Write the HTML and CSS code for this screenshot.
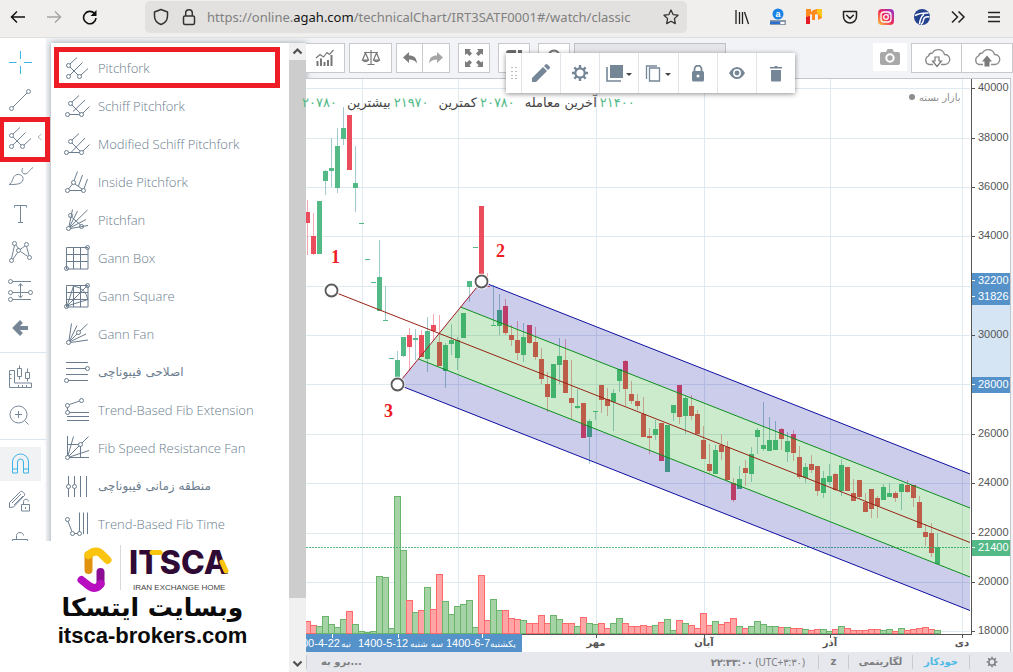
FILE: index.html
```html
<!DOCTYPE html>
<html lang="fa">
<head>
<meta charset="utf-8">
<title>Technical chart</title>
<link rel="stylesheet" href="styles.css">
</head>
<body>
<svg class="sprite" aria-hidden="true">
  <symbol id="i-pitchfork" viewBox="0 0 28 26"><path d="M6 9 13 2.500M6 12l8 8M6 20 18.500 7.500M17 20l7-6.500"/><circle cx="4.500" cy="10.500" r="2"/><circle cx="4.500" cy="21.500" r="2"/><circle cx="15.500" cy="21.500" r="2"/></symbol>
  <symbol id="i-schiff" viewBox="0 0 28 26"><path d="M8 9l7-6.500M8 12l8 8M9 18.500 21 7M5.500 21.500h10M19 20l6.500-6.500"/><circle cx="6.500" cy="10.500" r="2"/><circle cx="3.500" cy="21.500" r="2"/><circle cx="17.500" cy="21.500" r="2"/></symbol>
  <symbol id="i-mschiff" viewBox="0 0 28 26"><path d="M8 9l7-6.500M8 12l8 8M7 21.500 21 7M4.500 21.500h11M19 20l6.500-6.500"/><circle cx="6.500" cy="10.500" r="2"/><circle cx="2.500" cy="21.500" r="2"/><circle cx="17.500" cy="21.500" r="2"/></symbol>
  <symbol id="i-inside" viewBox="0 0 28 26"><path d="M10 11.500l3.500-9M11 15l7 5M4.500 20l4-5M14.500 17l4-11M5.500 21.500h12M20 19.500l3.500-9.500"/><circle cx="9.500" cy="13.500" r="2"/><circle cx="3.500" cy="21.500" r="2"/><circle cx="19.500" cy="21.500" r="2"/></symbol>
  <symbol id="i-pitchfan" viewBox="0 0 28 26"><path d="M5 19.500 8.500 2.500M5.500 20l8-16M6 20 23.500 3M6.500 20.500 22 12.500M6.500 21.500l17.500-3M7.500 10l9 8"/><circle cx="6.500" cy="8.500" r="2"/><circle cx="4.500" cy="21.500" r="2"/><circle cx="17.500" cy="19.500" r="2"/></symbol>
  <symbol id="i-gbox" viewBox="0 0 28 26"><path d="M2.500 2.500h21.500v21.500H2.500zM9.500 2.500V24M16.500 2.500V24M2.500 9.500H24M2.500 16.500H24"/><circle cx="23.500" cy="2.500" r="2"/><circle cx="2.500" cy="23.500" r="2"/></symbol>
  <symbol id="i-gsquare" viewBox="0 0 28 26"><path d="M2.500 2.500h21.500v21.500H2.500zM9.500 2.500V24M16.500 2.500V24M2.500 9.500H24M2.500 16.500H24M3 23 24 2M3 23 9.500 3M3 23l21-6.500M9.500 3Q22 5 24 17"/><circle cx="23.500" cy="2.500" r="2"/><circle cx="2.500" cy="23.500" r="2"/></symbol>
  <symbol id="i-gfan" viewBox="0 0 28 26"><path d="M5 19.500 7.500 2.500M5.500 20 13 4.500M6 20l7-7M16 10l7.500-7M6.500 20.500 22 13M6.500 21.500l17.500-2.500"/><circle cx="14.500" cy="11.500" r="2"/><circle cx="4.500" cy="21.500" r="2"/></symbol>
  <symbol id="i-fib" viewBox="0 0 28 26"><path d="M2 3.500h22M2 9.500h20M2 15.500h22M4 21.500h20"/><circle cx="23.500" cy="9.500" r="2"/><circle cx="2.500" cy="21.500" r="2"/></symbol>
  <symbol id="i-fibext" viewBox="0 0 28 26"><path d="M15.500 4l-10 3.500M3.500 10.500v3M5.500 15.500H25M3 19.500h22M3 23.500h22"/><circle cx="17.500" cy="3.500" r="2"/><circle cx="3.500" cy="8.500" r="2"/><circle cx="3.500" cy="15.500" r="2"/></symbol>
  <symbol id="i-fibspeed" viewBox="0 0 28 26"><path d="M3.500 1v19.500M5.500 22.500H25M4 20.500 9.500 1.500M5 21 15 11M18 8l6.500-6.500M5.500 22 25 15.500M3.500 9.500h11M16.500 11.500v11"/><circle cx="3.500" cy="22.500" r="2"/><circle cx="16.500" cy="9.500" r="2"/></symbol>
  <symbol id="i-fibzone" viewBox="0 0 28 26"><path d="M4.500 3v8.500M4.500 15.500V24M10.500 3v8.500M10.500 15.500V24M16.500 3v21M22.500 3v21"/><circle cx="4.500" cy="13.500" r="2"/><circle cx="10.500" cy="13.500" r="2"/></symbol>
  <symbol id="i-fibtime" viewBox="0 0 28 26"><path d="M4 10.500l4 10M10.500 22.500h3M15.500 1.500v19M19.500 1.500v21.500M23.500 1.500v21.500"/><circle cx="3.500" cy="8.500" r="2"/><circle cx="8.500" cy="22.500" r="2"/><circle cx="15.500" cy="22.500" r="2"/></symbol>
  <symbol id="i-gear" viewBox="0 0 18 18"><g fill="none" stroke="currentColor"><circle cx="9" cy="9" r="4.700" stroke-width="2.200"/><path stroke-width="2.400" d="M9 1v3M9 14v3M1 9h3M14 9h3M3.300 3.300l2.200 2.200M12.500 12.500l2.200 2.200M3.300 14.700l2.200-2.200M12.500 5.500l2.200-2.200"/></g></symbol>
  <symbol id="i-cloud" viewBox="0 0 28 20"><path fill="#fff" stroke="#8a8a8a" stroke-width="1.300" d="M10 16.500H6A4.500 4.500 0 0 1 5.500 8a4 4 0 0 1 4-3 6.500 6.500 0 0 1 12 1.500 5 5 0 0 1 .5 10h-4"/></symbol>
</svg>

<header class="browser">
  <button class="nav" aria-label="Back"><svg width="16" height="14" viewBox="0 0 16 14"><path d="M15 7H1.500M7 1.500 1.500 7 7 12.500" stroke="#111" stroke-width="1.500" fill="none"/></svg></button>
  <button class="nav" aria-label="Forward"><svg width="16" height="14" viewBox="0 0 16 14"><path d="M1 7h13.500M9 1.500 14.500 7 9 12.500" stroke="#a5a5a5" stroke-width="1.500" fill="none"/></svg></button>
  <button class="nav" aria-label="Reload"><svg width="16" height="16" viewBox="0 0 16 16"><path d="M14 9A6.200 6.200 0 1 1 12.500 4.500" stroke="#111" stroke-width="1.600" fill="none"/><path d="M14.500 1v6h-6z" fill="#111"/></svg></button>
  <div class="address">
    <svg width="16" height="18" viewBox="0 0 16 18"><path d="M8 1.500 14.500 4v4c0 4-2.500 7-6.500 8.500C4 15 1.500 12 1.500 8V4z" stroke="#333" stroke-width="1.500" fill="none" stroke-linejoin="round"/></svg>
    <svg width="14" height="18" viewBox="0 0 14 18"><rect x="1.500" y="8" width="11" height="8.500" rx="1.500" stroke="#333" stroke-width="1.500" fill="none"/><path d="M3.700 8V5a3.300 3.300 0 0 1 6.600 0v3" stroke="#333" stroke-width="1.500" fill="none"/></svg>
    <span class="url">https://online.<b>agah.com</b>/technicalChart/IRT3SATF0001#/watch/classic</span>
    <svg width="16" height="16" viewBox="0 0 16 16"><path d="m8 1 2.100 4.600 4.900.6-3.600 3.400.9 5L8 12.200l-4.300 2.400.9-5L1 6.200l4.900-.6z" stroke="#333" stroke-width="1.300" fill="none" stroke-linejoin="round"/></svg>
  </div>
  <div class="extensions">
    <svg width="16" height="16" viewBox="0 0 16 16"><path d="M2 1v14M5.500 3v12M8.500 3v12M10.500 3l4 12" stroke="#222" stroke-width="1.300" fill="none"/></svg>
    <svg width="16" height="18" viewBox="0 0 16 18"><circle cx="8" cy="6" r="5.500" fill="#1a82e2"/><text x="8" y="9" class="ext-a">a</text><path d="M0 12h16v5H0z" fill="#8b98a8"/><path d="M0 13.500h10v2.500H0z" fill="#2a6fd0"/><path d="M10.500 14h4v2h-4z" fill="#fff"/></svg>
    <svg width="16" height="16" viewBox="0 0 16 16"><path d="M0 0h5v3q2-3 5-2.500V0h6v9l-4 2V6q-2-2-3 0v5H6V6Q5 4 4 6v4l-4 1z" fill="#ff8a1e"/><path d="M11 0h5v9l-5-5z" fill="#fdc41b"/><path d="M0 8l4-1v8H0z" fill="#e21b25"/></svg>
    <svg width="16" height="16" viewBox="0 0 16 16"><path d="M1.500 2.500h13v5a6.500 6.500 0 0 1-13 0zM4.700 6.300 8 9.500l3.300-3.200" stroke="#222" stroke-width="1.500" fill="none" stroke-linejoin="round" stroke-linecap="round"/></svg>
    <svg width="16" height="16" viewBox="0 0 16 16"><defs><linearGradient id="insta" x1="0" y1="1" x2="1" y2="0"><stop offset="0" stop-color="#ffc83d"/><stop offset=".5" stop-color="#ee2a5b"/><stop offset="1" stop-color="#8a35d6"/></linearGradient></defs><rect width="16" height="16" rx="4" fill="url(#insta)"/><rect x="3" y="3" width="10" height="10" rx="3" stroke="#fff" stroke-width="1.300" fill="none"/><circle cx="8" cy="8" r="2.300" stroke="#fff" stroke-width="1.300" fill="none"/><circle cx="11" cy="5" r=".7" fill="#fff"/></svg>
    <svg width="16" height="16" viewBox="0 0 16 16"><circle cx="8" cy="8" r="8" fill="#24418e"/><path d="M1 6.500Q6 3.500 14.500 4M5.500 15Q6 9 10 5M15.500 8Q10 7 9.500 11 9 14 7 15.500" stroke="#fff" stroke-width="1.500" fill="none"/></svg>
    <svg width="16" height="16" viewBox="0 0 16 16"><path d="m2 2.500 5.500 5.500L2 13.500M8.500 2.500 14 8l-5.500 5.500" stroke="#222" stroke-width="1.500" fill="none"/></svg>
    <svg width="16" height="16" viewBox="0 0 16 16"><path d="M2 3.500h12M2 8h12M2 12.500h12" stroke="#222" stroke-width="1.500"/></svg>
  </div>
</header>

<main class="app">
  <nav class="rail">
    <button aria-label="Crosshair" class="tint"><svg class="ico" viewBox="0 0 28 26"><path d="M2 13.500h7.500M17 13.500h8M13.500 2v8M13.500 17v8"/></svg></button>
    <button aria-label="Trend line"><svg class="ico" viewBox="0 0 28 26"><path d="M6 20 20 6"/><circle cx="4.500" cy="21.500" r="2"/><circle cx="21.500" cy="4.500" r="2"/></svg></button>
    <button aria-label="Pitchfork tools" class="marked"><svg class="ico"><use href="#i-pitchfork"/></svg><svg class="chev" width="5" height="8" viewBox="0 0 5 8"><path d="M4.500 1 1 4l3.500 3"/></svg></button>
    <button aria-label="Brush"><svg class="ico" viewBox="0 0 28 26"><path d="M2 21.500c4-1 3-9 8-10 4-.5 6.500 2 6 5-1 5-7 5-14 5zM16 5c-2 2-1 6 2 6 3 0 4-4 8-6.500"/></svg></button>
    <button aria-label="Text"><svg class="ico" viewBox="0 0 28 26"><path d="M7.500 6.500V4.500h12v2M13.500 4.500v17M11 21.500h5"/></svg></button>
    <button aria-label="Patterns"><svg class="ico" viewBox="0 0 28 26"><path d="M7.500 6.500l-3 13M9 6l3 4M13.500 12.500l7.500 5M18 7l-5 3.500M6 20l5-7M19.500 7.500l2.500 9"/><circle cx="7.500" cy="4.500" r="2"/><circle cx="19.500" cy="5.500" r="2"/><circle cx="11.500" cy="11.500" r="2"/><circle cx="4.500" cy="21.500" r="2"/><circle cx="22.500" cy="18.500" r="2"/></svg></button>
    <button aria-label="Measure"><svg class="ico" viewBox="0 0 28 26"><path d="M5.500 4.500H24M5.500 15.500h16M5.500 22.500H24M13.500 7v13M11.500 9l2-2.500 2 2.500M11.500 18.500l2 2.500 2-2.500"/><circle cx="3.500" cy="4.500" r="2"/><circle cx="3.500" cy="15.500" r="2"/><circle cx="23.500" cy="15.500" r="2"/><circle cx="3.500" cy="22.500" r="2"/></svg></button>
    <button aria-label="Arrow"><svg class="ico" viewBox="0 0 28 26"><path d="M21 13H9M14.500 6.500 8 13l6.500 6.500" stroke-width="4"/></svg></button>
    <hr>
    <button aria-label="Forecast"><svg class="ico" viewBox="0 0 28 26"><path d="M2.500 6.500h5v12.500h17v4.500h-22zM2.500 10.500h2M2.500 14.500h2M11.500 21v2M15.500 21v2M19.500 21v2M10.500 4.500h4v8h-4zM12.500 1.500v3M12.500 12.500v3M18.500 8.500h4v6h-4zM20.500 4.500v4M20.500 14.500v3"/></svg></button>
    <button aria-label="Zoom in"><svg class="ico" viewBox="0 0 28 26"><circle cx="11.500" cy="12.500" r="8.500"/><path d="M17.500 18.500l4 4M8 12.500h7M11.500 9v7"/></svg></button>
    <hr>
    <button aria-label="Magnet" class="tint active"><svg class="ico" viewBox="0 0 28 26"><path d="M5.500 22V11a8 8 0 0 1 16 0v11h-5V11a3 3 0 0 0-6 0v11zM5.500 18h5M16.500 18h5"/></svg></button>
    <button aria-label="Lock drawings"><svg class="ico" viewBox="0 0 28 26"><path d="M2.500 18.500v-5l11-11c1.500-1 5 2 4 4l-11 11.500zM5 14 14 5M7 16l9-9M14.500 15.500h8v6.500h-8zM16.500 15.500v-3c0-3 5-3 5 0M18.500 18v2"/></svg></button>
    <button aria-label="Lock all"><svg class="ico" viewBox="0 0 28 26"><path d="M5.500 16.500v-4h15v10h-15zM9.500 12.500v-4c0-4 7-4 7 0"/></svg></button>
  </nav>

  <section class="menu">
    <ul class="menu-list">
      <li class="marked"><svg class="ico"><use href="#i-pitchfork"/></svg>Pitchfork</li>
      <li><svg class="ico"><use href="#i-schiff"/></svg>Schiff Pitchfork</li>
      <li><svg class="ico"><use href="#i-mschiff"/></svg>Modified Schiff Pitchfork</li>
      <li><svg class="ico"><use href="#i-inside"/></svg>Inside Pitchfork</li>
      <li><svg class="ico"><use href="#i-pitchfan"/></svg>Pitchfan</li>
      <li><svg class="ico"><use href="#i-gbox"/></svg>Gann Box</li>
      <li><svg class="ico"><use href="#i-gsquare"/></svg>Gann Square</li>
      <li><svg class="ico"><use href="#i-gfan"/></svg>Gann Fan</li>
      <li class="fa"><svg class="ico"><use href="#i-fib"/></svg>اصلاحی فیبوناچی</li>
      <li><svg class="ico"><use href="#i-fibext"/></svg>Trend-Based Fib Extension</li>
      <li><svg class="ico"><use href="#i-fibspeed"/></svg>Fib Speed Resistance Fan</li>
      <li class="fa"><svg class="ico"><use href="#i-fibzone"/></svg>منطقه زمانی فیبوناچی</li>
      <li><svg class="ico"><use href="#i-fibtime"/></svg>Trend-Based Fib Time</li>
    </ul>
    <div class="scrollbar">
      <svg width="17" height="17" viewBox="0 0 17 17"><path d="M4.500 10.500l4-4 4 4" stroke="#505050" stroke-width="2.200" fill="none"/></svg>
      <div class="thumb"></div>
      <svg width="17" height="17" viewBox="0 0 17 17"><path d="M4.500 6.500l4 4 4-4" stroke="#505050" stroke-width="2.200" fill="none"/></svg>
    </div>
  </section>

  <section class="work">
    <div class="toolbar">
      <div class="group">
        <button class="tb cut" aria-label="Indicators"><svg width="20" height="18" viewBox="0 0 20 18"><path d="M2.500 17v-5M6 17V9.500M9.500 17v-4M13 17v-6M16.500 17V6" stroke="#777" stroke-width="2"/><path d="m1 9 4-3.500 3.500 2.500L12 3.500l2.500 2L18.500 1" stroke="#777" stroke-width="1.200" fill="none"/></svg></button>
        <button class="tb compare" aria-label="Compare"><svg width="20" height="18" viewBox="0 0 20 18"><path d="M10 1v14M6.500 15.500h7M3 3.500h14M4.500 4 1.500 11h6zM15.500 4l-3 7h6zM1.500 11q3 3 6 0M12.500 11q3 3 6 0" stroke="#777" stroke-width="1.200" fill="none"/></svg></button>
        <div class="pair"><button class="tb" aria-label="Undo"><svg width="16" height="14" viewBox="0 0 16 14"><path d="M7 1v3.500c5 0 7.500 2 8 8-2-3-4-4-8-4V12L1 6.500z" fill="#7c7c7c"/></svg></button><button class="tb" aria-label="Redo"><svg width="16" height="14" viewBox="0 0 16 14"><path d="M9 1v3.500c-5 0-7.500 2-8 8 2-3 4-4 8-4V12l6-5.500z" fill="#a5a5a5"/></svg></button></div>
      </div>
      <div class="group">
        <button class="tb" aria-label="Full screen"><svg width="20" height="20" viewBox="0 0 20 20"><path d="M1 1h6L5.500 2.800 8 5.500 5.500 8 2.800 5.500 1 7zM19 1v6l-1.800-1.500L14.500 8 12 5.500l2.700-2.700L13 1zM1 19v-6l1.800 1.500L5.500 12 8 14.500l-2.500 2.700L7 19zM19 19h-6l1.700-1.800L12 14.500l2.500-2.500 2.700 2.500L19 13z" fill="#7c7c7c"/></svg></button>
      </div>
      <div class="group">
        <button class="tb" aria-label="Save layout"><svg width="18" height="18" viewBox="0 0 18 18"><path d="M1 4a3 3 0 0 1 3-3h7v5H4v12H1zM13 1h4v17h-4z" fill="#6f6f6f"/></svg></button>
      </div>
      <div class="group">
        <button class="tb" aria-label="Load layout"><svg width="18" height="18" viewBox="0 0 18 18"><path d="M3 9c0-10 12-10 12 0" stroke="#777" stroke-width="2" fill="none"/></svg></button>
        <input class="search" aria-label="Symbol">
      </div>
      <div class="group right">
        <button class="camera" aria-label="Snapshot"><svg width="20" height="16" viewBox="0 0 20 16"><path d="M2 3h4l1.500-3h5L14 3h4a2 2 0 0 1 2 2v9a2 2 0 0 1-2 2H2a2 2 0 0 1-2-2V5a2 2 0 0 1 2-2z" fill="#a8a8a8"/><circle cx="10" cy="9" r="3.700" stroke="#fff" stroke-width="2" fill="none"/></svg></button>
        <div class="pair wide"><button class="tb" aria-label="Download"><svg width="28" height="20" viewBox="0 0 28 20"><use href="#i-cloud"/><path d="M12 9h4v4h2.500L14 18.500 9.500 13H12z" fill="#fff" stroke="#777" stroke-width="1.200"/></svg></button><button class="tb" aria-label="Upload"><svg width="28" height="20" viewBox="0 0 28 20"><use href="#i-cloud"/><path d="M11.500 18.500v-5H9L14 7.500l5 6h-2.500v5z" fill="#7b7b7b"/></svg></button></div>
      </div>
    </div>

    <div class="chart">
      <svg id="chart" viewBox="306 79 704 573" preserveAspectRatio="xMinYMin meet" role="img" aria-label="Price chart"></svg>
      <div class="legend">
        <span class="pair-v"><i>۲۰۷۸۰</i></span>
        <span class="pair-v">بیشترین<i>۲۱۹۷۰</i></span>
        <span class="pair-v">کمترین<i>۲۰۷۸۰</i></span>
        <span class="pair-v">آخرین معامله<i>۲۱۴۰۰</i></span>
      </div>
    </div>

    <div class="palette">
      <span class="grip"><svg width="8" height="14" viewBox="0 0 8 14"><path d="M1 1h2v1H1zM5 1h2v1H5zM1 5h2v1H1zM5 5h2v1H5zM1 9h2v1H1zM5 9h2v1H5zM1 12h2v1H1zM5 12h2v1H5z" fill="#b8bcc4"/></svg></span>
      <button aria-label="Edit"><svg width="18" height="18" viewBox="0 0 18 18"><path d="M0 14 11 3l4 4L4 18H0zM12 2l1.500-1.500q1-1 2 0l2 2q1 1 0 2L16 6z" fill="#758696"/></svg></button>
      <button aria-label="Settings"><svg width="18" height="18"><use href="#i-gear"/></svg></button>
      <button aria-label="Background"><svg width="26" height="17" viewBox="0 0 26 17"><path d="M4 0h13v13H4z" fill="#758696"/><path d="M1 2v14h14" stroke="#758696" stroke-width="1.600" fill="none"/><path d="M20 8h6l-3 3z" fill="#444"/></svg></button>
      <button aria-label="Copy"><svg width="26" height="17" viewBox="0 0 26 17"><path d="M4.500 3h10v13h-10zM1.500 14V1H12" stroke="#758696" stroke-width="1.300" fill="none"/><path d="M20 8h6l-3 3z" fill="#444"/></svg></button>
      <button aria-label="Lock"><svg width="14" height="17" viewBox="0 0 14 17"><path d="M3.500 7V4a3.500 3.500 0 0 1 7 0v3" stroke="#758696" stroke-width="1.800" fill="none"/><rect x="1" y="6" width="12" height="10.500" rx="1.500" fill="#758696"/><circle cx="7" cy="11" r="1.500" fill="#fff"/></svg></button>
      <button aria-label="Hide"><svg width="16" height="12" viewBox="0 0 16 12"><path d="M0 6q3.500-6 8-6t8 6q-3.500 6-8 6T0 6z" fill="#758696"/><circle cx="8" cy="6" r="3.200" fill="none" stroke="#fff" stroke-width="1.500"/></svg></button>
      <button aria-label="Remove"><svg width="14" height="17" viewBox="0 0 14 17"><path d="M2 5h10v10.500q0 1-1 1H3q-1 0-1-1zM1 2h4l1-1h2l1 1h4v1.500H1z" fill="#758696"/></svg></button>
    </div>

    <footer class="status">
      <button class="goto">برو به...</button>
      <span class="clock"><b>۲۲:۳۳:۰۰</b> (UTC+۳:۳۰)</span>
      <button class="cell z">z</button>
      <button class="cell log">لگاریتمی</button>
      <button class="cell auto">خودکار</button>
      <button class="cell gear" aria-label="Chart settings"><svg width="12" height="12"><use href="#i-gear"/></svg></button>
    </footer>
  </section>

  <aside class="brand">
    <svg width="160" height="50" viewBox="0 0 160 50" role="img" aria-label="ITSCA Iran Exchange Home">
      <path d="M15.500 12v15" stroke="#e0920f" stroke-width="8" stroke-linecap="round"/>
      <path d="M15.500 12q8-7 14 0l5 5" stroke="#fbc40e" stroke-width="8" stroke-linecap="round" fill="none"/>
      <path d="M27.500 29v12" stroke="#8b0d93" stroke-width="8" stroke-linecap="round"/>
      <path d="M8.500 37l5 4q9 8 14 0" stroke="#b70fc0" stroke-width="8" stroke-linecap="round" fill="none"/>
      <path d="M47.500 2v45" stroke="#d9d9d9"/>
      <text class="word" x="56" y="31">ITSCA</text>
      <path d="M79 9.500h8" stroke="#fbc40e" stroke-width="5" stroke-linecap="round"/>
      <path d="M149 19l4 9" stroke="#fbc40e" stroke-width="5" stroke-linecap="round"/>
      <text class="tag" x="60" y="47">IRAN EXCHANGE HOME</text>
    </svg>
    <p class="site-fa">وبسایت ایتسکا</p>
    <p class="site-en">itsca-brokers.com</p>
  </aside>
</main>
<script src="chart.js"></script>
</body>
</html>
```

FILE: styles.css
```css
*, *::before { box-sizing: border-box; }
body {
  margin: 0;
  height: 100vh;
  display: flex;
  flex-direction: column;
  overflow: hidden;
  background: #f1f3f6;
  font-family: "Noto Sans", "DejaVu Sans", sans-serif;
}
button { border: 0; padding: 0; background: none; font: inherit; color: inherit; display: flex; align-items: center; justify-content: center; }
svg { display: block; flex: none; }
.sprite { position: absolute; width: 0; height: 0; }

/* browser bar */
.browser { display: flex; align-items: center; flex: none; height: 38px; padding: 0 10px 3px; background: #f0efee; border-bottom: 1px solid #dedede; }
.nav { width: 16px; margin-right: 20px; }
.nav:nth-child(3) { margin-right: 47px; }
.address { flex: 1; display: flex; align-items: center; height: 32px; padding: 0 8px; border-radius: 5px; background: #e2e1df; }
.address svg:nth-child(2) { margin: 0 11px 0 13px; }
.url { flex: 1; color: #808080; font-family: "Noto Sans", sans-serif; font-size: 13px; white-space: nowrap; }
.url b { font-weight: 400; color: #151515; }
.extensions { display: flex; align-items: center; gap: 20px; margin-left: 47px; padding-right: 1px; }
.ext-a { font: bold 9px "Liberation Sans", sans-serif; fill: #fff; text-anchor: middle; }

/* drawing rail */
.app { position: relative; flex: 1; display: flex; min-height: 0; overflow: hidden; }
.rail { width: 46px; flex: none; padding-top: 5px; background: #fff; color: #758696; }
.rail button { position: relative; width: 42px; height: 38px; }
.rail hr { margin: 5px 0; border: 0; border-top: 1px solid #dbe6ee; }
.rail .tint { color: #3bb3e4; }
.rail .active { background: linear-gradient(#f1f2f4, #f1f2f4) 0 50% / 41px 34px no-repeat; }
.rail .marked::before { content: ""; position: absolute; top: -2px; left: -1px; width: 51px; height: 45px; border: 5px solid #ee1c24; z-index: 3; }
.chev { position: absolute; right: 0; top: 14px; fill: none; stroke: #a9b3bd; }
.ico { width: 28px; height: 26px; fill: none; stroke: currentColor; stroke-width: 1; }

/* tools menu */
.menu { display: flex; width: 255px; flex: none; margin: 5px 0 0 5px; background: #fff; box-shadow: 0 0 6px rgba(60, 75, 90, .5); }
.menu-list { flex: 1; margin: 0; padding: 6px 0 0; list-style: none; color: #6a7c8d; font-family: "Open Sans", "Noto Sans", sans-serif; font-weight: 300; font-size: 13px; }
.menu-list li { position: relative; display: flex; align-items: center; gap: 6px; height: 38px; padding-left: 13px; white-space: nowrap; }
.menu-list .fa { font-family: "DejaVu Sans", sans-serif; font-weight: 400; font-size: 12px; }
.menu-list .marked::before { content: ""; position: absolute; inset: -2px 9px -1px 3px; border: 5px solid #ee1c24; }
.scrollbar { display: flex; flex-direction: column; width: 17px; background: #f0f0f0; }
.thumb { flex: 1; margin-bottom: 57px; background: #cdcdcd; }

/* chart column */
.work { position: relative; flex: 1; min-width: 0; display: flex; flex-direction: column; }
.toolbar { display: flex; flex: none; gap: 8px; height: 40px; padding-top: 5px; }
.group { display: flex; gap: 4px; }
.tb { width: 32px; height: 30px; border: 1px solid #c9c9cb; background: #fff; }
.tb.cut { width: 39px; border-left: 0; }
.tb.compare { width: 43px; }
.pair { display: flex; }
.pair .tb { width: 27px; }
.pair .tb + .tb { border-left-width: 0; }
.pair.wide .tb { width: 51px; }
.search { width: 152px; height: 30px; border: 1px solid #bfc0c4; background: #e6e6ea; }
.right { margin-left: auto; }
.camera { width: 34px; height: 28px; background: #fff; }
.chart { position: relative; flex: 1; min-height: 0; margin-right: 2px; border-top: 1px solid #c4c6ca; border-right: 1px solid #c4c6ca; background: #fff; }
#chart { width: 100%; height: 100%; }
.legend { position: absolute; left: -4px; top: 15px; display: flex; gap: 10px; color: #444; font: 13px/18px "DejaVu Sans", sans-serif; white-space: nowrap; }
.pair-v { display: flex; gap: 3px; }
.legend i { font-style: normal; color: #53b987; }
.palette { position: absolute; left: 200px; top: 15px; display: flex; width: 289px; height: 40px; background: #fff; box-shadow: 0 1px 5px rgba(0, 0, 0, .45); color: #758696; }
.grip { width: 15px; display: flex; align-items: center; justify-content: center; }
.palette button { flex: 1; border-left: 1px solid #e2e4ea; }

/* status bar */
.status { display: flex; flex: none; align-items: center; height: 20px; background: #e6e8ed; color: #7d7d80; font: 11px/14px "DejaVu Sans", sans-serif; }
.goto { margin-right: auto; padding-left: 14px; border-left: 1px solid #c9ccd1; direction: ltr; font-weight: 700; font-size: 10px; }
.clock { margin-right: 13px; font-family: "Noto Sans", "DejaVu Sans", sans-serif; font-size: 10px; }
.cell { height: 14px; border-left: 1px solid #c9ccd1; font-weight: 700; font-size: 10px; }
.z { width: 30px; }
.log { width: 64px; }
.auto { width: 57px; color: #4dbbe6; }
.gear { width: 44px; }

/* chart text */
.price { font: 11px "Liberation Sans", sans-serif; fill: #555; }
.tagtext { font: 11px "Liberation Sans", sans-serif; fill: #fff; }
.tagday { font: 9px "DejaVu Sans", sans-serif; fill: #fff; }
.month { font: bold 10px "DejaVu Sans", sans-serif; fill: #555; text-anchor: middle; }
.market { font: 10px "DejaVu Sans", sans-serif; fill: #8d8d8d; }
.note { font: bold 18px "Liberation Serif", serif; fill: #ee1c24; }

/* site badge */
.brand { position: absolute; left: 0; bottom: 0; width: 289px; height: 131px; padding: 2px 0 0 16px; background: #fff; color: #0b0b0b; display: flex; flex-direction: column; align-items: center; }
.brand p { margin: 0; }
.word { font: 800 32px Inter, sans-serif; fill: #2f0a35; }
.tag { font: 8px "Liberation Sans", sans-serif; fill: #444; }
.brand .site-fa { font: 700 25px/30px "DejaVu Sans", sans-serif; }
.brand .site-en { font: 700 22px/26px "Liberation Sans", sans-serif; }
```

FILE: chart.js
```js
// Each candle: direction, high, low, body top, body bottom, volume top.
const rows = `r 200 255 212 223 621|r 213 255 236 254 625|g 201 254 201 254 626|g 170 195 171 181 616|g 138 187 168 171 624|g 128 193 146 188 627|g 107 145 128 139 619|r 115 170 115 170 611|g 146 212 183 188 624|g 223 224 223 224 631|g 259 260 259 260 632|g 282 283 282 283 631|g 240 311 277 311 576|g 286 321 320 321 577|g 358 359 358 359 628|g 351 377 360 377 496|g 337 357 337 356 550|r 328 371 335 347 600|g 329 360 338 340 612|r 330 357 335 357 610|g 317 372 331 359 587|r 314 340 325 331 609|r 315 366 342 366 574|g 343 388 345 371 601|g 324 355 340 344 614|g 337 370 340 358 606|g 313 338 313 338 604|g 281 302 281 287 600|g 247 248 247 248 627|r 206 274 206 274 575|r 273 287 286 287 620|g 285 326 325 326 599|g 294 335 310 326 610|r 299 335 306 333 610|r 325 346 335 340 618|r 321 360 340 353 619|g 323 362 337 355 620|r 325 344 325 343 623|r 327 360 342 357 623|r 348 384 359 379 615|r 372 412 384 397 623|g 364 398 364 398 615|g 338 384 356 365 619|r 339 393 360 393 623|r 360 419 398 403 623|g 389 409 406 408 626|r 403 438 403 438 617|g 419 464 421 437 623|g 411 420 411 412 624|r 385 413 385 400 623|r 388 416 399 406 628|g 389 431 393 402 623|g 369 392 369 381 618|r 360 406 361 389 623|r 381 404 394 401 626|r 394 410 401 406 626|r 397 437 414 437 625|r 428 454 436 438 626|g 420 440 429 435 625|r 423 461 423 461 622|g 425 472 425 472 619|g 405 421 405 413 630|r 385 424 385 417 620|g 396 434 398 416 623|r 395 420 406 416 625|r 410 435 414 434 628|r 426 459 440 459 613|r 444 473 464 471 625|g 445 474 450 474 621|r 434 460 445 452 624|r 441 481 447 480 622|r 478 502 483 500 618|g 466 489 479 489 626|r 460 486 468 473 628|g 447 482 454 474 626|g 428 454 430 437 621|g 402 451 445 449 624|g 417 451 440 451 626|g 421 450 440 450 626|r 428 450 429 439 627|g 432 462 441 452 627|r 430 461 434 453 628|r 446 479 457 477 628|g 463 483 467 478 629|r 455 473 464 470 630|r 466 496 466 491 629|g 471 498 478 493 629|g 464 485 476 482 631|r 473 491 474 490 629|g 459 496 465 491 626|r 467 491 467 491 628|r 479 501 493 501 630|r 480 499 480 497 630|r 493 512 502 512 630|r 489 518 489 509 629|r 496 518 498 506 629|g 484 500 487 500 630|g 483 497 493 497 629|r 491 502 493 498 631|g 483 510 484 492 628|r 480 493 485 492 630|r 485 507 485 498 629|r 496 528 502 528 628|r 524 546 532 537 627|r 523 557 533 553 629|g 533 564 547 564 630`;

const candles = rows.split('|').map((row, i) => {
  const [dir, ...n] = row.split(' ');
  const [high, low, top, bottom, vol] = n.map(Number);
  return { x: 307.5 + i * 6, dir, high, low, top, bottom, vol };
});
const body = { g: '#53b987', r: '#eb4d5c' };
const wick = { g: '#a3cbcf', r: '#f3a8af' };
const line = (x1, y1, x2, y2, c, extra = '') =>
  `<line x1="${x1}" y1="${y1}" x2="${x2}" y2="${y2}" stroke="${c}" ${extra}/>`;
const rect = (x, y, w, h, c, extra = '') =>
  `<rect x="${x}" y="${y}" width="${w}" height="${h}" fill="${c}" ${extra}/>`;
const text = (x, y, cls, s, extra = '') => `<text x="${x}" y="${y}" class="${cls}" ${extra}>${s}</text>`;

let out = '';
const levels = [88, 138, 187, 236, 286, 335, 384, 434, 483, 533, 582, 631];
levels.forEach(y => { out += line(306, y + .5, 970, y + .5, '#dfe9f0'); });
[362, 458, 596, 704, 830, 962].forEach(x => { out += line(x + .5, 79, x + .5, 634, '#dfe9f0'); });

candles.forEach(c => {
  const [fill, stroke] = c.dir === 'g' ? ['#a6d3a6', '#6ab56a'] : ['#ffa5a5', '#ff6b6b'];
  out += rect(c.x - 3, c.vol + .5, 6, 633 - c.vol, fill, `stroke="${stroke}"`);
});
candles.forEach(c => {
  out += line(c.x, c.high, c.x, c.low, wick[c.dir]);
  out += rect(c.x - 2.5, c.top, 5, c.bottom - c.top, body[c.dir]);
});
out += line(306, 547.5, 970, 547.5, '#53b987', 'stroke-dasharray="2 1"');

// Pitchfork channel
out += '<path d="M481.500 281.500 970 474V508L460.500 307zM418.500 359 970 577V610.500L397.500 384.500z" fill="#009" fill-opacity=".2"/>';
out += '<path d="M460.500 307 970 508V577L418.500 359z" fill="#090" fill-opacity=".2"/>';
out += line(481.5, 281.5, 970, 474, '#0f0fa0') + line(397.5, 384.5, 970, 610.5, '#0f0fa0');
out += line(460.5, 307, 970, 508, '#0b8f1b') + line(418.5, 359, 970, 577, '#0b8f1b');
out += line(331.5, 291, 970, 542.5, '#962212') + line(397.5, 384.5, 481.5, 281.5, '#a31a2a');
[[331, 290], [481, 281], [397, 384]].forEach(([x, y]) => {
  out += `<circle cx="${x + .5}" cy="${y + .5}" r="8" fill="#fff" fill-opacity=".7"/><circle cx="${x + .5}" cy="${y + .5}" r="6" fill="#fff" stroke="#5a5a5a" stroke-width="1.8"/>`;
});
out += text(331, 263, 'note', '1') + text(496, 257, 'note', '2') + text(384, 417, 'note', '3');

// Price axis
out += rect(972, 275, 39, 116, '#d5e5f4');
out += line(971.5, 79, 971.5, 635, '#555');
levels.forEach((y, i) => {
  out += line(972, y + .5, 975, y + .5, '#555');
  if (i !== 4 && i !== 6) out += text(978, y + 3, 'price', 40000 - i * 2000);
});
[[273, 32200, '#5592c9'], [289, 31826, '#5592c9'], [377, 28000, '#5592c9'], [540, 21400, '#53b987']].forEach(([y, n, c]) => {
  out += rect(972, y, 38, 16, c) + line(972, y + 7.5, 975, y + 7.5, '#fff') + text(978, y + 11, 'tagtext', n);
});

// Time axis
out += rect(306, 635, 705, 18, '#fff') + line(306, 634.5, 972, 634.5, '#555');
[[596, 'مهر'], [704, 'آبان'], [830, 'آذر'], [962, 'دی']].forEach(([x, s]) => {
  out += line(x + .5, 635, x + .5, 638, '#555') + text(x, 646, 'month', s);
});
out += rect(306, 634, 216, 19, '#5592c9');
[332, 398, 482].forEach(x => { out += line(x + .5, 634, x + .5, 638, '#fff'); });
out += text(302, 647, 'tagtext', '00-4-22') + text(341, 647, 'tagday', 'نبه');
out += text(358, 647, 'tagtext', '1400-5-12') + text(410, 647, 'tagday', 'سه شنبه');
out += text(446, 647, 'tagtext', '1400-6-7') + text(490, 647, 'tagday', 'یکشنبه');

out += '<circle cx="912" cy="97" r="3" fill="#8d8d8d"/>' + text(919, 101, 'market', 'بازار بسته');
document.getElementById('chart').innerHTML = out;
```
